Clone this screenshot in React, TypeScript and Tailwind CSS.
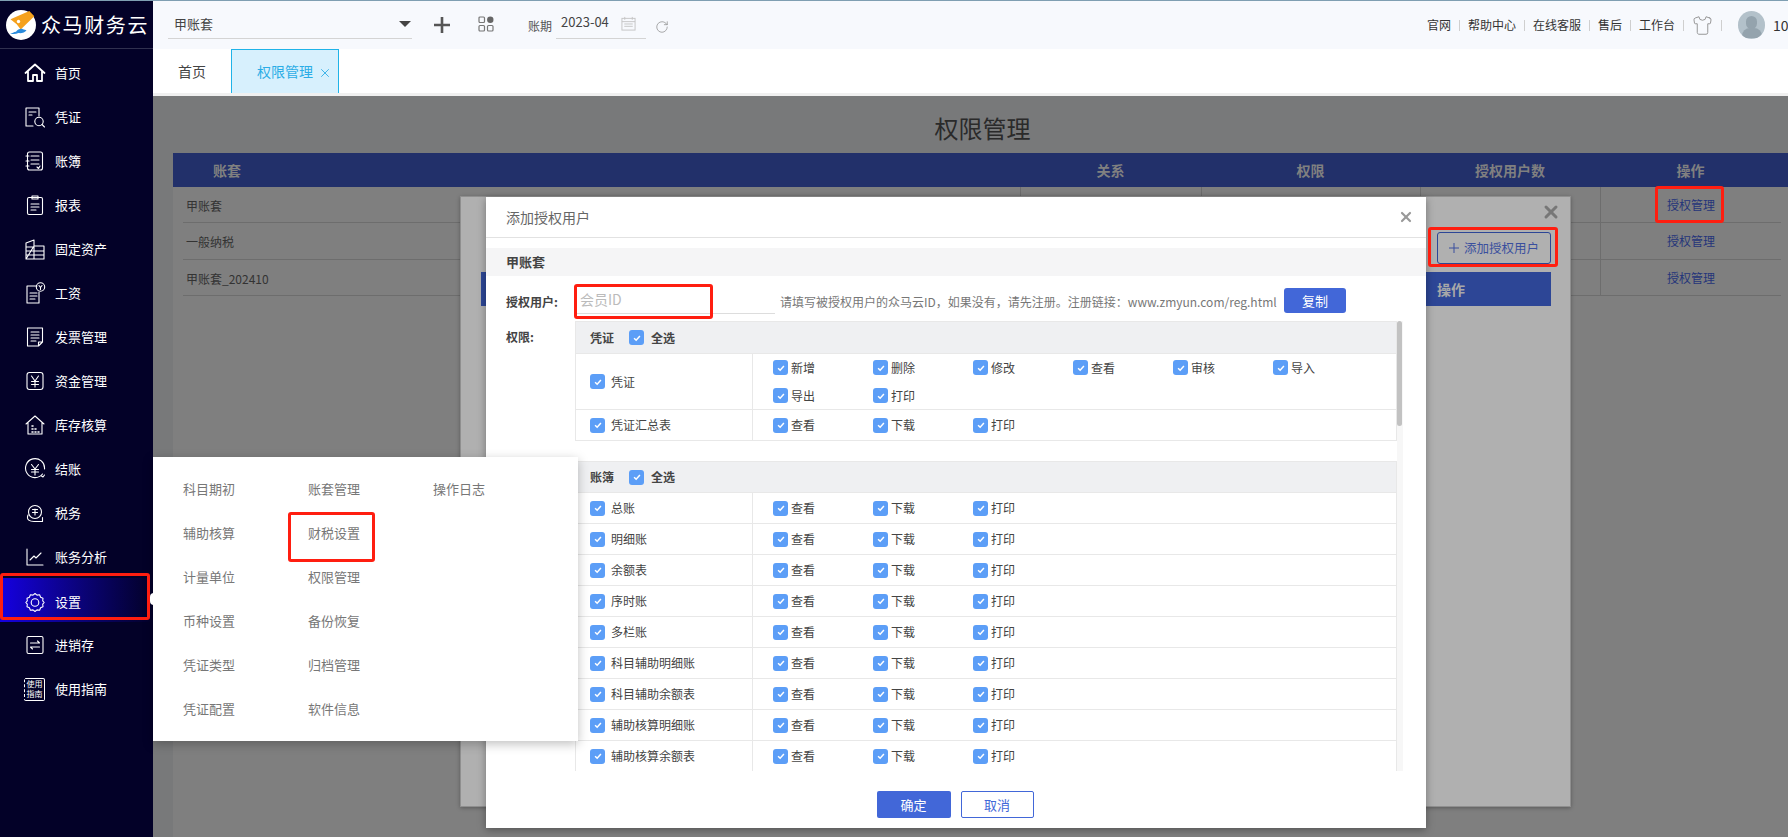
import React from "react";
import { RotateCw, Shirt, X } from "lucide-react";

const S = { fill: "none", stroke: "#fff", strokeWidth: 1.1, strokeLinecap: "round" as const, strokeLinejoin: "round" as const };

const Svg = ({ children }: { children: React.ReactNode }) => (
  <svg viewBox="0 0 22 22" className="w-[22px] h-[22px] shrink-0 mr-[9px]" {...S}>{children}</svg>
);

const icons: Record<string, React.ReactNode> = {
  home: <Svg><path d="M1.5 11 11 2.5 20.5 11M4 9.5V19h5v-6h4v6h5V9.5" strokeWidth={1.8} /></Svg>,
  voucher: <Svg><path d="M15 10V2H2v18h7M5 6h7M5 9h3" /><circle cx="15" cy="15.5" r="4.2" /><path d="m18 18.5 2.5 2.5" /></Svg>,
  book: <Svg><rect x="3.5" y="2" width="15" height="18" rx="2" /><path d="M2 6h3M2 11h3M2 16h3M7 6h8M7 10h8M7 14h8M13 17l1.5 1.5L16 16" /></Svg>,
  report: <Svg><rect x="3.5" y="3.5" width="15" height="17" rx="1.5" /><path d="M8 5V2h6v3zM7 10h8M7 13h8M7 16h5" /></Svg>,
  assets: <Svg><path d="M2 21V5l8-3v19M10 8h10v13H2zM2 9h8M2 13h8M2 17h8M10 13h10M10 17h10" /></Svg>,
  salary: <Svg><path d="M13 4H3v17h12V10M6 11h7M6 14h7M6 17h5" /><circle cx="16.5" cy="5" r="4.2" /><path d="M15 3.5l1.5 2 1.5-2M16.5 5.5v2" /></Svg>,
  invoice: <Svg><path d="M3.5 2h15v14l-4 4h-11zM7 6h8M7 9h8M7 12h8M7 15h5M14.5 20v-4h4" /></Svg>,
  fund: <Svg><rect x="3" y="2.5" width="16" height="17" rx="2.5" /><path d="m7.5 6 3.5 5 3.500-5M7.500 11.500h7M7.500 14.500h7M11 11v6" /></Svg>,
  stock: <Svg><path d="M2 10 11 2l9 8M4 8v12h14V8" /><path d="M8 12h1M8 15h1M11 15h1M8 18h1M11 18h1M14 18h1" strokeWidth={1.6} /></Svg>,
  closing: <Svg><path d="M18.500 16A9.500 9.500 0 1 1 20.500 11" /><path d="m7.500 6.500 3.500 4.500 3.500-4.500M7.500 11.500h7M7.500 14h7M11 11v6M17.500 18l1.500 1 1.500-2" /></Svg>,
  tax: <Svg><circle cx="11" cy="10" r="6.500" /><path d="M4 13c-2 5 2 6.500 6 6.500h8.500v-4M8.500 7.500h5M11 7v6M8.500 10.500h5" /></Svg>,
  analysis: <Svg><path d="M3 3v16h16M6 14l4-4 2 2 5-5" /></Svg>,
  settings: <Svg><path d="M11 2.500l2 1.600 2.600-.3 1 2.400 2.400 1-.3 2.600 1.500 1.700-1.500 1.700.3 2.600-2.400 1-1 2.400-2.600-.3-2 1.600-2-1.600-2.600.3-1-2.400-2.400-1 .3-2.600L1.800 11.500l1.500-1.700L3 7.200l2.400-1 1-2.400 2.600.3z" /><circle cx="11" cy="11.500" r="3.800" /></Svg>,
  jxc: <Svg><rect x="3" y="2.500" width="16" height="17" rx="1.500" /><path d="M6.500 9h9l-2-2M15.500 13h-9l2 2" /></Svg>,
};

const nav: [string, string][] = [
  ["home", "首页"], ["voucher", "凭证"], ["book", "账簿"], ["report", "报表"], ["assets", "固定资产"],
  ["salary", "工资"], ["invoice", "发票管理"], ["fund", "资金管理"], ["stock", "库存核算"], ["closing", "结账"],
  ["tax", "税务"], ["analysis", "账务分析"], ["settings", "设置"], ["jxc", "进销存"], ["guide", "使用指南"],
];

const Logo = () => (
  <svg viewBox="0 0 30 30" className="w-[30px] h-[30px] shrink-0">
    <circle cx="15" cy="15" r="15" fill="#fff" />
    <path d="M4.500 9.300 23.300 1l5 5.200-13.600 13.300-4-5.300z" fill="#f5a11c" />
    <circle cx="12.500" cy="11.500" r="1.700" fill="#fff" />
    <path d="M4 23.500c2.500 0 3.500-1.800 6-1.800 1.500-2.400 5-3.500 7-2.500l3.500 1c-1.500 2.300-5 3.300-8 2.800-2.500 1-5 1.500-8.500.5z" fill="#2a8bdc" />
  </svg>
);

const GuideIcon = () => (
  <div className="w-[21px] h-[23px] mr-[10px] shrink-0 border border-white [border-left-style:dashed] rounded-[2px] flex flex-col items-center justify-center text-white text-[8px] leading-[10px]">
    <span>使用</span>
    <span>指南</span>
  </div>
);

const Sidebar = () => (
  <aside className="w-[153px] shrink-0 bg-[#030128] flex flex-col text-white">
    <div className="h-[48px] shrink-0 flex items-center pl-[6px] border-b border-[#30304f]">
      <Logo />
      <span className="ml-[5px] text-[20px] tracking-[1.6px] whitespace-nowrap leading-none">众马财务云</span>
    </div>
    <nav className="flex flex-col pt-[2px]">
      {nav.map(([k, t]) =>
        k === "settings" ? (
          <div key={k} className="h-[44px] -mt-[1px] mb-[1px] pt-[4px] flex items-center pl-[24px] text-[13px] bg-gradient-to-r from-[#1500e2] to-[#030128]">
            {icons[k]}
            <span>{t}</span>
          </div>
        ) : (
          <div key={k} className="h-[44px] flex items-center pl-[24px] text-[13px]">
            {k === "guide" ? <GuideIcon /> : icons[k]}
            <span>{t}</span>
          </div>
        )
      )}
    </nav>
  </aside>
);

const Sep = () => <span className="block w-px h-[11px] bg-[#cfcfcf] shrink-0" />;

const TopBar = () => (
  <header className="h-[48px] shrink-0 bg-[#f7f9fd] flex items-start text-[#444] relative">
    <div className="ml-[15px] mt-[8px] w-[244px] h-[30px] border-b border-[#d4d4d4] flex items-center justify-between pl-[6px] pr-[1px] text-[13px]">
      <span>甲账套</span>
      <span className="w-0 h-0 border-x-[6px] border-x-transparent border-t-[6px] border-t-[#444]" />
    </div>
    <svg viewBox="0 0 16 16" className="w-[16px] h-[16px] ml-[22px] mt-[16px]" stroke="#555" strokeWidth={2.600} fill="none">
      <path d="M8 0v16M0 8h16" />
    </svg>
    <svg viewBox="0 0 16 16" className="w-[16px] h-[16px] ml-[28px] mt-[15px]" fill="none" stroke="#777" strokeWidth={1.200}>
      <rect x="1" y="1" width="5.500" height="5.500" rx="1" />
      <rect x="1" y="9.500" width="5.500" height="5.500" rx="1" />
      <rect x="9.500" y="9.500" width="5.500" height="5.500" rx="1" />
      <circle cx="12.300" cy="3.800" r="3.200" fill="#666" stroke="none" />
    </svg>
    <span className="ml-[34px] mt-[15px] text-[12px] leading-[20px] text-[#555]">账期</span>
    <div className="ml-[4px] mt-[8px] w-[90px] h-[30px] border-b border-[#d4d4d4] flex items-center pl-[5px] pb-[3px] text-[13px] relative">
      <span>2023-04</span>
      <svg viewBox="0 0 16 16" className="w-[15px] h-[15px] ml-[12px] mt-[3px]" fill="none" stroke="#c4c4c4" strokeWidth={1}>
        <rect x="1" y="2.500" width="14" height="12.500" />
        <path d="M1 6h14M4 1v3M12 1v3M3.500 8.500h9M3.500 11h9" />
      </svg>
    </div>
    <RotateCw className="ml-[9px] mt-[19px] w-[14px] h-[14px] text-[#888]" strokeWidth={1.200} />
    <div className="absolute right-0 top-0 h-[48px] w-[361px] flex items-center text-[12px] text-[#333] overflow-hidden">
      <span className="w-[24px] shrink-0 whitespace-nowrap">官网</span>
      <span className="ml-[8px]"><Sep /></span>
      <span className="ml-[8px] shrink-0 whitespace-nowrap">帮助中心</span>
      <span className="ml-[8px]"><Sep /></span>
      <span className="ml-[8px] shrink-0 whitespace-nowrap">在线客服</span>
      <span className="ml-[8px]"><Sep /></span>
      <span className="ml-[8px] shrink-0 whitespace-nowrap">售后</span>
      <span className="ml-[8px]"><Sep /></span>
      <span className="ml-[8px] shrink-0 whitespace-nowrap">工作台</span>
      <span className="ml-[8px]"><Sep /></span>
      <Shirt className="ml-[8px] w-[21px] h-[21px] text-[#8a8a8a] shrink-0" strokeWidth={1} />
      <span className="ml-[8px]"><Sep /></span>
      <div className="ml-[16px] w-[27px] h-[28px] rounded-full bg-[#b3c1ca] shrink-0 overflow-hidden flex flex-col items-center pt-[5px]">
        <span className="w-[11px] h-[13px] rounded-full bg-[#94a3ad]" />
        <span className="w-[20px] h-[10px] rounded-t-[8px] bg-[#94a3ad] -mt-[1px]" />
      </div>
      <span className="ml-[8px] text-[14px] shrink-0">10</span>
    </div>
  </header>
);

const Tabs = () => (
  <div className="h-[44px] shrink-0 bg-white flex items-stretch text-[14px]">
    <div className="w-[78px] flex items-center pl-[25px] text-[#444]">首页</div>
    <div className="w-[108px] bg-[#d7f0fd] border border-b-0 border-[#1fb3e8] flex items-center pl-[25px] text-[#2bade6] whitespace-nowrap">
      <span>权限管理</span>
      <X className="ml-[5px] mt-[2px] w-[14px] h-[14px]" strokeWidth={1.500} />
    </div>
  </div>
);

const rowsData = ["甲账套", "一般纳税", "甲账套_202410"];
const rowH = ["h-[36px]", "h-[37px]", "h-[36px]"];

const PageTable = () => (
  <main className="flex-1 bg-[#78797a] flex flex-col relative overflow-hidden">
    <h1 className="h-[57px] shrink-0 pt-[7px] pl-[24px] flex items-center justify-center text-[24px] text-[#2a2a2a] font-normal">权限管理</h1>
    <div className="ml-[20px] flex-1 bg-[#7f7f7f] flex flex-col">
      <div className="h-[34px] shrink-0 bg-[#22306a] text-[#808080] text-[14px] font-bold flex items-center">
        <span className="w-[847px] pl-[40px]">账套</span>
        <span className="w-[181px] text-center">关系</span>
        <span className="w-[219px] text-center">权限</span>
        <span className="w-[180px] text-center">授权用户数</span>
        <span className="w-[181px] text-center">操作</span>
      </div>
      <div className="ml-[10px] w-[1598px]">
        {rowsData.map((r, i) => (
          <div key={r} className={`${rowH[i]} flex items-stretch border-b border-[#6d6d6d] text-[12px] text-[#333]`}>
            <div className="w-[837px] pl-[3px] pt-[2px] flex items-center">{r}</div>
            <div className="w-[181px] border-l border-[#6d6d6d]" />
            <div className="w-[219px] border-l border-[#6d6d6d]" />
            <div className="w-[180px] border-l border-[#6d6d6d]" />
            <div className="w-[181px] border-l border-[#6d6d6d] flex items-center justify-center text-[#25357a]">授权管理</div>
          </div>
        ))}
      </div>
    </div>
  </main>
);

const Check = () => (
  <span className="w-[15px] h-[15px] rounded-[3px] bg-[#5c9ef7] shrink-0 flex items-center justify-center">
    <svg viewBox="0 0 12 12" className="w-[10px] h-[10px]" fill="none" stroke="#fff" strokeWidth={1.800}>
      <path d="m2.500 6.200 2.500 2.500 4.500-5" />
    </svg>
  </span>
);

const Perm = ({ t }: { t: string }) => (
  <span className="w-[100px] h-[28px] flex items-center text-[12px] text-[#444]">
    <Check />
    <span className="ml-[3px]">{t}</span>
  </span>
);

const PermRow = ({ label, items, h }: { label: string; items: string[]; h: string }) => (
  <div className={`${h} flex border-t border-[#e8e8e8]`}>
    <div className="w-[177px] shrink-0 border-r border-[#e8e8e8] pl-[14px] flex items-center text-[12px] text-[#444]">
      <Check />
      <span className="ml-[6px]">{label}</span>
    </div>
    <div className="flex-1 pl-[20px] flex flex-wrap content-center">
      {items.map((x) => <Perm key={x} t={x} />)}
    </div>
  </div>
);

const PermTable = ({ title, rows, head, className }: { title: string; rows: [string, string[], string][]; head: string; className?: string }) => (
  <section className={`border-x border-b border-[#e8e8e8] ${className ?? ""}`}>
    <div className={`${head} bg-[#eff0f2] border-t border-[#e8e8e8] flex items-center pl-[14px] text-[12px] font-bold text-[#444]`}>
      <span>{title}</span>
      <span className="ml-[15px]"><Check /></span>
      <span className="ml-[7px]">全选</span>
    </div>
    {rows.map(([l, it, h]) => <PermRow key={l} label={l} items={it} h={h} />)}
  </section>
);

const std = ["查看", "下载", "打印"];
const ledger = ["总账", "明细账", "余额表", "序时账", "多栏账", "科目辅助明细账", "科目辅助余额表", "辅助核算明细账", "辅助核算余额表"];

const Dialog = () => (
  <div className="absolute left-[486px] top-[197px] w-[940px] h-[631px] bg-white shadow-[0_2px_8px_rgba(0,0,0,0.35)] flex flex-col">
    <div className="h-[41px] shrink-0 border-b border-[#e2e2e2] flex items-center justify-between pl-[20px] pr-[12px] text-[14px] text-[#666]">
      <span>添加授权用户</span>
      <X className="w-[16px] h-[16px] text-[#999]" strokeWidth={3.200} />
    </div>
    <div className="mt-[10px] h-[28px] shrink-0 bg-[#f5f5f6] pl-[20px] flex items-center text-[13px] font-bold text-[#444]">甲账套</div>
    <div className="h-[45px] shrink-0 flex items-start pl-[20px]">
      <span className="w-[70px] pt-[17px] text-[12px] leading-[18px] font-bold text-[#444]">授权用户:</span>
      <div className="w-[199px] h-[38px] border-b border-[#ddd] pt-[12px] pl-[4px] text-[14px] leading-[22px] text-[#bbb]">会员ID</div>
      <span className="ml-[5px] pt-[17px] text-[12px] leading-[18px] text-[#777] whitespace-nowrap">请填写被授权用户的众马云ID，如果没有，请先注册。注册链接：www.zmyun.com/reg.html</span>
      <button className="absolute left-[798px] top-[91px] w-[62px] h-[25px] rounded-[3px] bg-[#4267d8] text-white text-[13px]">复制</button>
    </div>
    <div className="flex pl-[20px] h-[450px] shrink-0">
      <span className="w-[69px] pt-[7px] text-[12px] leading-[18px] font-bold text-[#444]">权限:</span>
      <div className="w-[828px] h-[450px] overflow-hidden flex">
        <div className="w-[822px] shrink-0">
          <PermTable head="h-[32px]" title="凭证" rows={[["凭证", ["新增", "删除", "修改", "查看", "审核", "导入", "导出", "打印"], "h-[56px]"], ["凭证汇总表", std, "h-[31px]"]]} />
          <PermTable head="h-[31px]" className="mt-[20px]" title="账簿" rows={ledger.map((l) => [l, std, "h-[31px]"] as [string, string[], string])} />
        </div>
        <div className="w-[6px] bg-[#f7f7f7] relative">
          <div className="w-[5px] h-[105px] rounded-[3px] bg-[#c2c2c2]" />
        </div>
      </div>
    </div>
    <div className="flex-1 flex items-start justify-center gap-[10px] pt-[20px] pr-[2px] text-[13px]">
      <button className="w-[74px] h-[27px] rounded-[2px] bg-[#4267d8] text-white">确定</button>
      <button className="w-[73px] h-[27px] rounded-[2px] border border-[#4267d8] text-[#4267d8] bg-white">取消</button>
    </div>
  </div>
);

const LayerDialog = () => (
  <div className="absolute left-[460px] top-[196px] w-[1111px] h-[611px] bg-[#b0b0b0] border border-[#8f8f8f] shadow-[0_1px_4px_rgba(0,0,0,0.3)] flex flex-col items-end pr-[19px] pt-[35px]">
    <X className="absolute right-[9px] top-[5px] w-[20px] h-[20px] text-[#777]" strokeWidth={3.600} />
    <button className="w-[114px] h-[32px] rounded-[3px] border border-[#2d4696] text-[#3a4f9e] text-[12.500px] flex items-center justify-center gap-[5px]">
      <svg viewBox="0 0 10 10" className="w-[10px] h-[10px]" stroke="#3a4f9e" strokeWidth={1} fill="none"><path d="M5 0v10M0 5h10" /></svg>
      添加授权用户
    </button>
    <div className="mt-[8px] h-[34px] w-[1070px] bg-[#2d4696] text-[#a8a8a8] text-[14px] font-bold flex items-center justify-end">
      <span className="w-[114px]">操作</span>
    </div>
  </div>
);

const menu = ["科目期初", "账套管理", "操作日志", "辅助核算", "财税设置", "", "计量单位", "权限管理", "", "币种设置", "备份恢复", "", "凭证类型", "归档管理", "", "凭证配置", "软件信息", ""];

const Popup = () => (
  <>
    <div className="absolute left-[153px] top-[457px] w-[425px] h-[284px] bg-white shadow-[0_3px_10px_rgba(0,0,0,0.25)] pl-[30px] pt-[10px] grid grid-cols-[125px_125px_125px] auto-rows-[44px] items-center text-[13px] text-[#777]">
      {menu.map((m, i) => <span key={i}>{m}</span>)}
    </div>
    <div className="absolute left-[150px] top-[593px] w-[4px] h-[12px] bg-white rounded-l-[4px]" />
  </>
);

const red = "absolute border-[3px] border-[#ff1e10] rounded-[3px]";

export default function App() {
  return (
    <div className="relative w-[1788px] h-[837px] overflow-hidden bg-white flex flex-col font-['Noto_Sans_CJK_SC','Noto_Sans',sans-serif]">
      <div className="h-px shrink-0 bg-[#7f9fb2]" />
      <div className="flex-1 min-h-0 flex">
        <Sidebar />
        <div className="flex-1 min-w-0 flex flex-col">
          <TopBar />
          <Tabs />
          <div className="h-[3px] shrink-0 bg-[#f0f0f0]" />
          <PageTable />
        </div>
      </div>
      <LayerDialog />
      <Dialog />
      <Popup />
      <div className={`${red} left-0 top-[573px] w-[150px] h-[47px]`} />
      <div className={`${red} left-[288px] top-[512px] w-[87px] h-[50px]`} />
      <div className={`${red} left-[574px] top-[284px] w-[139px] h-[35px]`} />
      <div className={`${red} left-[1428px] top-[227px] w-[130px] h-[40px]`} />
      <div className={`${red} left-[1655px] top-[186px] w-[69px] h-[37px]`} />
    </div>
  );
}
